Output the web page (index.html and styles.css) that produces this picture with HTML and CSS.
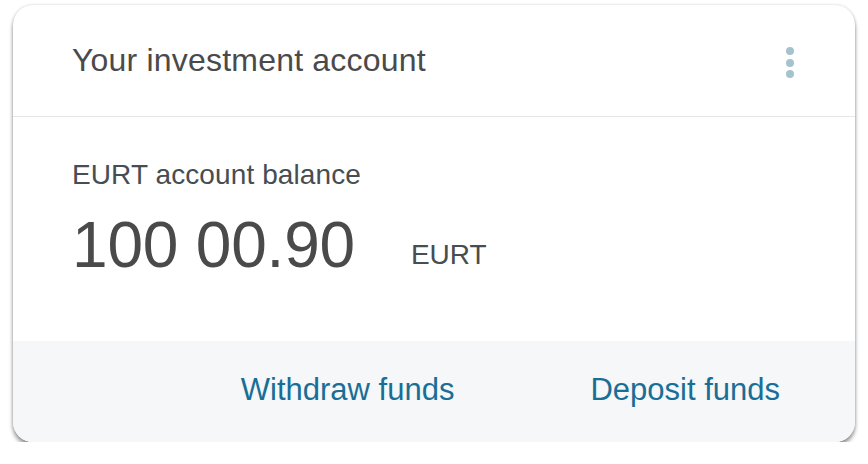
FILE: index.html
```html
<!DOCTYPE html>
<html>
<head>
<meta charset="utf-8">
<link rel="stylesheet" href="styles.css">
</head>
<body>
<div class="card">
  <div class="card-header">
    <h2 class="title">Your investment account</h2>
    <button class="menu" aria-label="More options">
      <span class="dot"></span><span class="dot"></span><span class="dot"></span>
    </button>
  </div>
  <div class="card-body">
    <div class="label">EURT account balance</div>
    <div class="balance"><span class="amount">100 00.90</span><span class="currency">EURT</span></div>
  </div>
  <div class="card-footer">
    <a class="action" href="#">Withdraw funds</a>
    <a class="action" href="#">Deposit funds</a>
  </div>
</div>
</body>
</html>
```
FILE: styles.css
```css
html, body {
  margin: 0;
  padding: 0;
  background: #ffffff;
}
body {
  font-family: "Liberation Sans", Arial, sans-serif;
  padding: 5px 13px 0 13px;
}
.card {
  width: 842px;
  height: 437px;
  box-sizing: border-box;
  background: #ffffff;
  border-radius: 20px;
  box-shadow: 0 4px 4px rgba(0,0,0,0.4), 0 0 3px rgba(0,0,0,0.18);
  display: flex;
  flex-direction: column;
  overflow: hidden;
}
.card-header {
  height: 112px;
  flex: none;
  box-sizing: border-box;
  border-bottom: 1px solid #e4e6e8;
  display: flex;
  align-items: center;
  justify-content: space-between;
  padding: 0 55px 0 59px;
}
.title {
  margin: 0;
  font-weight: normal;
  font-size: 32px;
  letter-spacing: 0.2px;
  color: #4a4a4a;
}
.menu {
  border: 0;
  background: none;
  padding: 4px 6px 0 6px;
  display: flex;
  flex-direction: column;
  gap: 3.5px;
  cursor: pointer;
}
.dot {
  width: 8px;
  height: 8px;
  border-radius: 50%;
  background: #a5c3cf;
}
.card-body {
  flex: 1;
  padding: 42px 59px 0 59px;
}
.label {
  font-size: 28px;
  line-height: 32px;
  letter-spacing: 0.1px;
  color: #464d53;
}
.balance {
  margin-top: 22px;
  line-height: 64px;
  height: 64px;
}
.amount {
  font-size: 64px;
  color: #4a4a4a;
  letter-spacing: -0.2px;
}
.currency {
  font-size: 28px;
  color: #464d53;
  margin-left: 56px;
  vertical-align: 3px;
}
.card-footer {
  height: 101px;
  flex: none;
  background: #f5f7f9;
  display: flex;
  align-items: center;
  justify-content: flex-end;
  gap: 136px;
  padding: 0 75px 4px 0;
  box-sizing: border-box;
}
.action {
  font-size: 31px;
  color: #1a6e96;
  text-decoration: none;
}
```
